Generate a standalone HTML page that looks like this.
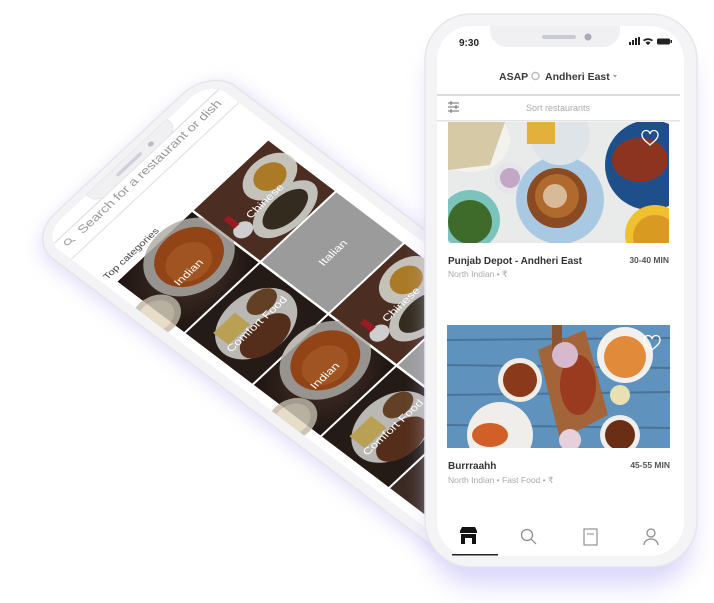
<!DOCTYPE html>
<html><head><meta charset="utf-8"><style>
html,body{margin:0;padding:0;background:#fff;width:714px;height:603px;overflow:hidden}
svg{display:block}
text{font-family:"Liberation Sans",sans-serif}
</style></head><body>
<svg width="714" height="603" viewBox="0 0 714 603" xmlns="http://www.w3.org/2000/svg">
<defs>
<filter id="blur" x="-30%" y="-30%" width="160%" height="160%"><feGaussianBlur stdDeviation="12"/></filter>
<clipPath id="lscreen"><rect x="-12" y="-123" width="270" height="733" rx="30"/></clipPath>
<clipPath id="img1"><rect x="448" y="122" width="221" height="121"/></clipPath>
<clipPath id="img2"><rect x="447" y="325" width="223" height="123"/></clipPath>
<radialGradient id="dark" cx="50%" cy="50%" r="70%"><stop offset="0" stop-color="#5a4034"/><stop offset="1" stop-color="#261a16"/></radialGradient>
</defs>

<g transform="matrix(0.62,-0.58,0.554,0.42,117.6,281.6)">
  <rect x="-30" y="-130" width="300" height="765" rx="45" fill="#cfcaf6" opacity="0.7" filter="url(#blur)"/>
  <rect x="-25" y="-135" width="296" height="765" rx="45" fill="#f3f3f5" stroke="#e6e6ea" stroke-width="2"/>
  <rect x="-12" y="-123" width="270" height="733" rx="30" fill="#fff"/>
  <g clip-path="url(#lscreen)">
    <text x="123" y="-108" font-size="10" fill="#333" text-anchor="middle">Search restaurants</text>
    <line x1="-12" y1="-104" x2="258" y2="-104" stroke="#e2e2e2" stroke-width="2"/>
    <circle cx="2" cy="-92" r="4" fill="none" stroke="#999" stroke-width="1.3"/>
    <line x1="5" y1="-89" x2="9" y2="-86" stroke="#999" stroke-width="1.3"/>
    <text x="20" y="-85" font-size="17" fill="#9a9a9a" textLength="225">Search for a restaurant or dish</text>
    <line x1="-12" y1="-70" x2="258" y2="-70" stroke="#e6e6e6" stroke-width="2"/>
    <text x="-6" y="-12" font-size="13" fill="#444">Top categories</text>
    <g>
      <rect x="0" y="0" width="120" height="120" fill="url(#dark)"/>
      <circle cx="-5" cy="75" r="30" fill="#cfc4b4"/><circle cx="-5" cy="75" r="22" fill="#e6dcc8"/>
      <circle cx="75" cy="45" r="55" fill="#bdb9b4"/><circle cx="75" cy="45" r="42" fill="#b8561c"/>
      <circle cx="70" cy="50" r="28" fill="#c96a2a"/>
      <rect x="0" y="0" width="120" height="120" fill="#000" opacity="0.2"/>
      <text x="60" y="66" font-size="15" fill="#fff" text-anchor="middle">Indian</text>
    </g>
    <g>
      <rect x="123" y="0" width="120" height="120" fill="#5a3628"/>
      <ellipse cx="210" cy="40" rx="35" ry="30" fill="#e8e4da"/><circle cx="210" cy="40" r="20" fill="#c8902e"/>
      <ellipse cx="190" cy="90" rx="45" ry="30" fill="#e4e2dc"/><ellipse cx="190" cy="90" rx="32" ry="20" fill="#3c3424"/>
      <circle cx="140" cy="70" r="12" fill="#f2f2f2"/><rect x="135" y="40" width="8" height="20" fill="#b5202a"/>
      <rect x="123" y="0" width="120" height="120" fill="#000" opacity="0.15"/>
      <text x="183" y="66" font-size="15" fill="#fff" text-anchor="middle">Chinese</text>
    </g>
    <g>
      <rect x="0" y="123" width="120" height="120" fill="#2e211c"/>
      <ellipse cx="60" cy="183" rx="52" ry="46" fill="#e8e6e2"/>
      <rect x="20" y="150" width="35" height="28" fill="#e8c86a"/>
      <ellipse cx="55" cy="205" rx="35" ry="24" fill="#6a3a22"/>
      <ellipse cx="85" cy="165" rx="20" ry="16" fill="#7a5030"/>
      <rect x="0" y="123" width="120" height="120" fill="#000" opacity="0.2"/>
      <text x="60" y="189" font-size="15" fill="#fff" text-anchor="middle">Comfort Food</text>
    </g>
    <g>
      <rect x="123" y="123" width="120" height="120" fill="#9b9b9b"/>
      <text x="183" y="189" font-size="15" fill="#fff" text-anchor="middle">Italian</text>
    </g>
    <g>
      <rect x="0" y="246" width="120" height="120" fill="url(#dark)"/>
      <circle cx="-5" cy="321" r="30" fill="#cfc4b4"/><circle cx="-5" cy="321" r="22" fill="#e6dcc8"/>
      <circle cx="75" cy="291" r="55" fill="#bdb9b4"/><circle cx="75" cy="291" r="42" fill="#b8561c"/>
      <circle cx="70" cy="296" r="28" fill="#c96a2a"/>
      <rect x="0" y="246" width="120" height="120" fill="#000" opacity="0.2"/>
      <text x="60" y="312" font-size="15" fill="#fff" text-anchor="middle">Indian</text>
    </g>
    <g>
      <rect x="123" y="246" width="120" height="120" fill="#5a3628"/>
      <ellipse cx="210" cy="286" rx="35" ry="30" fill="#e8e4da"/><circle cx="210" cy="286" r="20" fill="#c8902e"/>
      <ellipse cx="190" cy="336" rx="45" ry="30" fill="#e4e2dc"/><ellipse cx="190" cy="336" rx="32" ry="20" fill="#3c3424"/>
      <circle cx="140" cy="316" r="12" fill="#f2f2f2"/><rect x="135" y="286" width="8" height="20" fill="#b5202a"/>
      <rect x="123" y="246" width="120" height="120" fill="#000" opacity="0.15"/>
      <text x="183" y="312" font-size="15" fill="#fff" text-anchor="middle">Chinese</text>
    </g>
    <g>
      <rect x="0" y="369" width="120" height="120" fill="#2e211c"/>
      <ellipse cx="60" cy="429" rx="52" ry="46" fill="#e8e6e2"/>
      <rect x="20" y="396" width="35" height="28" fill="#e8c86a"/>
      <ellipse cx="55" cy="451" rx="35" ry="24" fill="#6a3a22"/>
      <ellipse cx="85" cy="411" rx="20" ry="16" fill="#7a5030"/>
      <rect x="0" y="369" width="120" height="120" fill="#000" opacity="0.2"/>
      <text x="60" y="435" font-size="15" fill="#fff" text-anchor="middle">Comfort Food</text>
    </g>
    <rect x="123" y="369" width="120" height="120" fill="#9b9b9b"/>
    <rect x="0" y="492" width="120" height="120" fill="#3a2a22"/>
    <rect x="-12" y="560" width="270" height="50" fill="#fff"/>
  </g>
  <path d="M60,-124 h130 v6 a14,14 0 0 1 -14,14 h-102 a14,14 0 0 1 -14,-14 z" fill="#f0f0f3" stroke="#e4e4e8"/>
  <rect x="100" y="-116" width="40" height="5" rx="2.5" fill="#cfd0da"/>
  <circle cx="155" cy="-113.5" r="3.5" fill="#b8bac6"/>
</g>

<rect x="430" y="40" width="262" height="545" rx="45" fill="#cdc8f8" opacity="0.75" filter="url(#blur)"/>
<rect x="425" y="14" width="272" height="553" rx="46" fill="#f4f4f6" stroke="#e6e6eb" stroke-width="1.5"/>
<rect x="437" y="26" width="247" height="530" rx="34" fill="#fff"/>
<path d="M490,26 h130 v4 a17,17 0 0 1 -17,17 h-96 a17,17 0 0 1 -17,-17 z" fill="#f0f0f3"/>
<rect x="542" y="35" width="34" height="4" rx="2" fill="#c9cad4"/>
<circle cx="588" cy="37" r="3.5" fill="#a9abb8"/>
<text x="459" y="46" font-size="10" font-weight="bold" fill="#222">9:30</text>
<g fill="#222">
  <rect x="629" y="42" width="2" height="3"/><rect x="632" y="40" width="2" height="5"/><rect x="635" y="38" width="2" height="7"/><rect x="638" y="37" width="2" height="8"/>
  <path d="M643,40 a8,8 0 0 1 10,0 l-1.2,1.4 a6,6 0 0 0 -7.6,0z M645.5,42.5 a4,4 0 0 1 5,0 l-2.5,2.8z"/>
  <rect x="657" y="38.5" width="13" height="6" rx="1.5"/><rect x="670.5" y="40" width="1.5" height="3"/>
</g>
<text x="499" y="80" font-size="10.5" font-weight="bold" fill="#3a3a3a">ASAP</text>
<circle cx="535.5" cy="76" r="3.5" fill="none" stroke="#bbb" stroke-width="1.5"/>
<text x="545" y="80" font-size="10.5" font-weight="bold" fill="#3a3a3a">Andheri East</text>
<path d="M613,75 l4,0 l-2,2.5z" fill="#999"/>
<rect x="437" y="94" width="243" height="2" fill="#dcdcdc"/>
<g stroke="#777" stroke-width="1.1">
  <line x1="448" y1="103" x2="459" y2="103"/><line x1="448" y1="107" x2="459" y2="107"/><line x1="448" y1="111" x2="459" y2="111"/>
  <line x1="451" y1="101" x2="451" y2="105"/><line x1="456" y1="105" x2="456" y2="109"/><line x1="451" y1="109" x2="451" y2="113"/>
</g>
<text x="558" y="111" font-size="9" fill="#aaa" text-anchor="middle">Sort restaurants</text>
<rect x="437" y="120" width="243" height="1.5" fill="#e4e4e4"/>

<g clip-path="url(#img1)">
  <rect x="448" y="122" width="221" height="121" fill="#e8ebea"/>
  <ellipse cx="470" cy="140" rx="40" ry="32" fill="#f4f2ee"/>
  <polygon points="448,122 505,122 490,165 448,170" fill="#d6c9a6"/>
  <circle cx="510" cy="178" r="16" fill="#e6e6ea"/><circle cx="510" cy="178" r="10" fill="#c3a7c6"/>
  <circle cx="470" cy="220" r="30" fill="#7cc3bb"/><circle cx="470" cy="222" r="22" fill="#3e6a2a"/>
  <circle cx="560" cy="200" r="44" fill="#a9c9e2"/><circle cx="557" cy="198" r="30" fill="#8a4a22"/><circle cx="557" cy="196" r="22" fill="#b06a2e"/><circle cx="555" cy="196" r="12" fill="#eadbc6" opacity="0.7"/>
  <circle cx="560" cy="135" r="30" fill="#dfe4e8"/><rect x="527" y="122" width="28" height="22" fill="#e3b03c"/>
  <circle cx="650" cy="165" r="45" fill="#1f4f8a"/><ellipse cx="640" cy="160" rx="28" ry="22" fill="#8c3420"/>
  <circle cx="655" cy="235" r="30" fill="#f0c030"/><circle cx="655" cy="237" r="22" fill="#d89a20"/>
</g>
<path d="M650,145 c-3,-3 -8,-6 -8,-10 a4,4 0 0 1 8,-1 a4,4 0 0 1 8,1 c0,4 -5,7 -8,10z" fill="none" stroke="#fff" stroke-width="1.3"/>
<text x="448" y="264" font-size="10" font-weight="bold" fill="#333" textLength="134">Punjab Depot - Andheri East</text>
<text x="669" y="263" font-size="8.5" font-weight="bold" fill="#555" text-anchor="end">30-40 MIN</text>
<text x="448" y="277" font-size="8.5" fill="#aaa">North Indian • ₹</text>

<g clip-path="url(#img2)">
  <rect x="447" y="325" width="223" height="123" fill="#5f93bd"/>
  <g stroke="#3d5f80" stroke-width="2" opacity="0.6"><line x1="447" y1="340" x2="670" y2="338"/><line x1="447" y1="365" x2="670" y2="368"/><line x1="447" y1="395" x2="670" y2="392"/><line x1="447" y1="425" x2="670" y2="428"/></g>
  <polygon points="538,350 585,330 608,415 560,440" fill="#a4643a"/>
  <rect x="552" y="325" width="10" height="30" fill="#8a5430"/>
  <ellipse cx="578" cy="385" rx="18" ry="30" fill="#9a3a1e"/>
  <circle cx="565" cy="355" r="13" fill="#d8b8cc"/>
  <circle cx="520" cy="380" r="22" fill="#f0ece6"/><circle cx="520" cy="380" r="17" fill="#8a3a1a"/>
  <circle cx="500" cy="435" r="33" fill="#f0eeea"/><ellipse cx="490" cy="435" rx="18" ry="12" fill="#d06028"/>
  <circle cx="625" cy="355" r="28" fill="#f2f0ec"/><circle cx="625" cy="357" r="21" fill="#e08a3a"/>
  <circle cx="620" cy="395" r="10" fill="#e8e0b0"/>
  <circle cx="620" cy="435" r="20" fill="#f0eeea"/><circle cx="620" cy="435" r="15" fill="#6a2e14"/>
  <circle cx="570" cy="440" r="11" fill="#e6d0dc"/>
</g>
<path d="M652,350 c-3,-3 -8,-6 -8,-10 a4,4 0 0 1 8,-1 a4,4 0 0 1 8,1 c0,4 -5,7 -8,10z" fill="none" stroke="#fff" stroke-width="1.3"/>
<text x="448" y="469" font-size="10" font-weight="bold" fill="#333">Burrraahh</text>
<text x="670" y="468" font-size="8.5" font-weight="bold" fill="#555" text-anchor="end">45-55 MIN</text>
<text x="448" y="483" font-size="8.5" fill="#aaa">North Indian • Fast Food • ₹</text>

<path d="M460,531 l2,-4 h13 l2,4 v2 h-17z M461,534 h15 v10 h-4 v-6 h-7 v6 h-4z" fill="#111"/>
<rect x="452" y="554" width="46" height="1.5" fill="#222"/>
<circle cx="527" cy="535" r="5.5" fill="none" stroke="#888" stroke-width="1.2"/>
<line x1="531" y1="539" x2="536" y2="544" stroke="#888" stroke-width="1.2"/>
<rect x="584" y="529" width="13" height="16" fill="none" stroke="#888" stroke-width="1.1"/>
<line x1="587" y1="534" x2="594" y2="534" stroke="#888"/>
<circle cx="651" cy="533" r="4" fill="none" stroke="#888" stroke-width="1.2"/>
<path d="M644,545 a7,6 0 0 1 14,0" fill="none" stroke="#888" stroke-width="1.2"/>
</svg>
</body></html>
